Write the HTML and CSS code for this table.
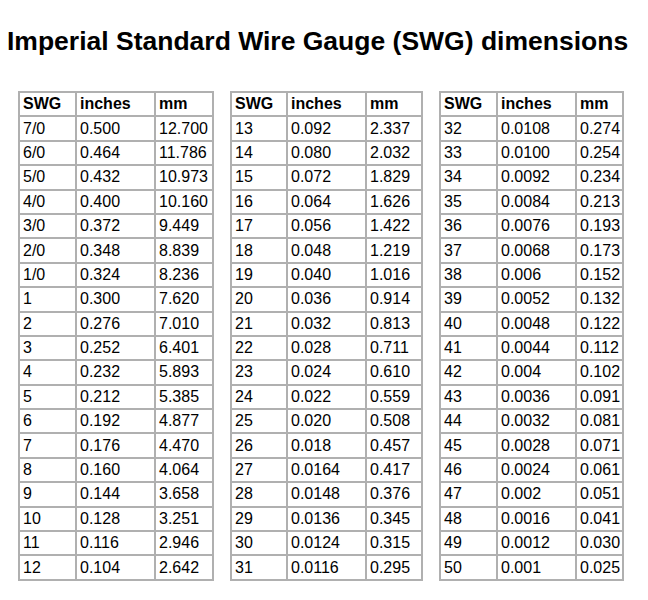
FILE: index.html
```html
<!DOCTYPE html>
<html>
<head>
<meta charset="utf-8">
<link rel="stylesheet" href="styles.css">
</head>
<body>
<h1 class="title">Imperial Standard Wire Gauge (SWG) dimensions</h1>
<div class="tables">
<table class="swg t1">
<tr><th>SWG</th><th>inches</th><th>mm</th></tr>
<tr><td>7/0</td><td>0.500</td><td>12.700</td></tr>
<tr><td>6/0</td><td>0.464</td><td>11.786</td></tr>
<tr><td>5/0</td><td>0.432</td><td>10.973</td></tr>
<tr><td>4/0</td><td>0.400</td><td>10.160</td></tr>
<tr><td>3/0</td><td>0.372</td><td>9.449</td></tr>
<tr><td>2/0</td><td>0.348</td><td>8.839</td></tr>
<tr><td>1/0</td><td>0.324</td><td>8.236</td></tr>
<tr><td>1</td><td>0.300</td><td>7.620</td></tr>
<tr><td>2</td><td>0.276</td><td>7.010</td></tr>
<tr><td>3</td><td>0.252</td><td>6.401</td></tr>
<tr><td>4</td><td>0.232</td><td>5.893</td></tr>
<tr><td>5</td><td>0.212</td><td>5.385</td></tr>
<tr><td>6</td><td>0.192</td><td>4.877</td></tr>
<tr><td>7</td><td>0.176</td><td>4.470</td></tr>
<tr><td>8</td><td>0.160</td><td>4.064</td></tr>
<tr><td>9</td><td>0.144</td><td>3.658</td></tr>
<tr><td>10</td><td>0.128</td><td>3.251</td></tr>
<tr><td>11</td><td>0.116</td><td>2.946</td></tr>
<tr><td>12</td><td>0.104</td><td>2.642</td></tr>
</table>
<table class="swg t2">
<tr><th>SWG</th><th>inches</th><th>mm</th></tr>
<tr><td>13</td><td>0.092</td><td>2.337</td></tr>
<tr><td>14</td><td>0.080</td><td>2.032</td></tr>
<tr><td>15</td><td>0.072</td><td>1.829</td></tr>
<tr><td>16</td><td>0.064</td><td>1.626</td></tr>
<tr><td>17</td><td>0.056</td><td>1.422</td></tr>
<tr><td>18</td><td>0.048</td><td>1.219</td></tr>
<tr><td>19</td><td>0.040</td><td>1.016</td></tr>
<tr><td>20</td><td>0.036</td><td>0.914</td></tr>
<tr><td>21</td><td>0.032</td><td>0.813</td></tr>
<tr><td>22</td><td>0.028</td><td>0.711</td></tr>
<tr><td>23</td><td>0.024</td><td>0.610</td></tr>
<tr><td>24</td><td>0.022</td><td>0.559</td></tr>
<tr><td>25</td><td>0.020</td><td>0.508</td></tr>
<tr><td>26</td><td>0.018</td><td>0.457</td></tr>
<tr><td>27</td><td>0.0164</td><td>0.417</td></tr>
<tr><td>28</td><td>0.0148</td><td>0.376</td></tr>
<tr><td>29</td><td>0.0136</td><td>0.345</td></tr>
<tr><td>30</td><td>0.0124</td><td>0.315</td></tr>
<tr><td>31</td><td>0.0116</td><td>0.295</td></tr>
</table>
<table class="swg t3">
<tr><th>SWG</th><th>inches</th><th>mm</th></tr>
<tr><td>32</td><td>0.0108</td><td>0.274</td></tr>
<tr><td>33</td><td>0.0100</td><td>0.254</td></tr>
<tr><td>34</td><td>0.0092</td><td>0.234</td></tr>
<tr><td>35</td><td>0.0084</td><td>0.213</td></tr>
<tr><td>36</td><td>0.0076</td><td>0.193</td></tr>
<tr><td>37</td><td>0.0068</td><td>0.173</td></tr>
<tr><td>38</td><td>0.006</td><td>0.152</td></tr>
<tr><td>39</td><td>0.0052</td><td>0.132</td></tr>
<tr><td>40</td><td>0.0048</td><td>0.122</td></tr>
<tr><td>41</td><td>0.0044</td><td>0.112</td></tr>
<tr><td>42</td><td>0.004</td><td>0.102</td></tr>
<tr><td>43</td><td>0.0036</td><td>0.091</td></tr>
<tr><td>44</td><td>0.0032</td><td>0.081</td></tr>
<tr><td>45</td><td>0.0028</td><td>0.071</td></tr>
<tr><td>46</td><td>0.0024</td><td>0.061</td></tr>
<tr><td>47</td><td>0.002</td><td>0.051</td></tr>
<tr><td>48</td><td>0.0016</td><td>0.041</td></tr>
<tr><td>49</td><td>0.0012</td><td>0.030</td></tr>
<tr><td>50</td><td>0.001</td><td>0.025</td></tr>
</table>
</div>
</body>
</html>
```
FILE: styles.css
```css
html, body {
  margin: 0;
  padding: 0;
  background: #ffffff;
  color: #000000;
  font-family: "Liberation Sans", Arial, sans-serif;
}
.title {
  margin: 0;
  padding: 24px 0 0 7px;
  font-size: 26.5px;
  line-height: 34px;
  font-weight: bold;
  white-space: nowrap;
}
.tables {
  display: flex;
  align-items: flex-start;
  gap: 16px;
  padding: 33px 0 0 18px;
}
.swg {
  border-collapse: collapse;
  font-size: 16px;
  table-layout: fixed;
}
.swg th, .swg td {
  border: 2px solid #b0b0b0;
  height: 22.4px;
  padding: 0 0 0 3px;
  text-align: left;
  vertical-align: middle;
  white-space: nowrap;
}
.swg th { font-weight: bold; }
.t1 th:nth-child(1) { width: 52px; }
.t1 th:nth-child(2) { width: 74px; }
.t1 th:nth-child(3) { width: 53px; }
.t2 th:nth-child(1) { width: 51px; }
.t2 th:nth-child(2) { width: 74px; }
.t2 th:nth-child(3) { width: 51px; }
.t3 th:nth-child(1) { width: 52px; }
.t3 th:nth-child(2) { width: 74px; }
.t3 th:nth-child(3) { width: 42px; }
```
